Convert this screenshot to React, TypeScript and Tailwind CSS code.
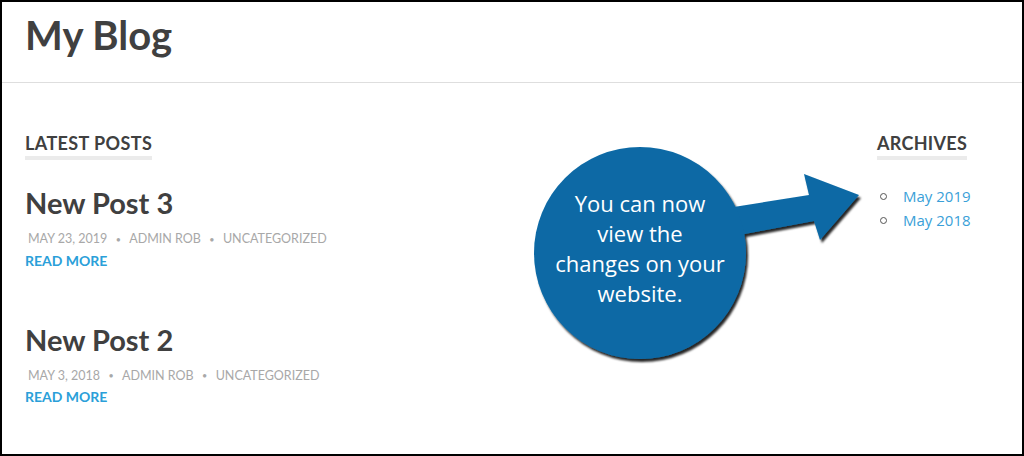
import React from "react";

const heading = { fontFamily: "Lato, 'Open Sans', sans-serif" };

function Post({ title, date, first }: { title: string; date: string; first?: boolean }) {
  return (
    <div className={`flex flex-col ${first ? "mt-[28px]" : "mt-[57px]"}`}>
      <h2 className="text-[29px] font-bold leading-none text-[#404040]" style={heading}>
        {title}
      </h2>
      <div
        className="mt-[16px] pl-[3px] text-[12.5px] leading-none text-[#a8a8a8] uppercase flex items-center"
        style={heading}
      >
        <span>{date}</span>
        <span className="w-[22px] text-center text-[9px]">•</span>
        <span>Admin Rob</span>
        <span className="w-[22px] text-center text-[9px]">•</span>
        <span>Uncategorized</span>
      </div>
      <a className="mt-[8px] text-[14px] font-bold leading-none text-[#2b9fd9] uppercase" style={heading}>
        Read More
      </a>
    </div>
  );
}

function Callout() {
  return (
    <div className="absolute inset-0 pointer-events-none">
      <svg width="1024" height="456" className="absolute left-0 top-0">
        <defs>
          <filter id="sh" x="-20%" y="-20%" width="140%" height="140%">
            <feDropShadow dx="2" dy="3" stdDeviation="1.3" floodColor="#000" floodOpacity="0.85" />
          </filter>
        </defs>
        <g filter="url(#sh)">
          <polygon
            points="700,210 807,193 802,172 857,193 818,238 812,219 700,240"
            fill="#0a69a5"
          />
          <circle cx="638" cy="251" r="106" fill="#0a69a5" />
        </g>
      </svg>
      <div
        className="absolute left-[532px] top-[186px] w-[212px] text-center text-white text-[22px] leading-[30px]"
        style={{ fontFamily: "'Open Sans', sans-serif" }}
      >
        You can now
        <br />
        view the
        <br />
        changes on your
        <br />
        website.
      </div>
    </div>
  );
}

export default function App() {
  return (
    <div className="relative w-[1024px] h-[456px] border-2 border-black bg-white overflow-hidden">
      <header className="h-[81px] border-b border-[#dedede] pl-[23px] pt-[13px]">
        <h1 className="text-[40px] font-bold leading-none text-[#404040]" style={heading}>
          My Blog
        </h1>
      </header>
      <main className="flex justify-between pl-[23px] pt-[51px]">
        <section className="flex flex-col">
          <div className="self-start">
            <h3 className="text-[18px] font-bold leading-none text-[#404040] uppercase tracking-[0.4px]" style={heading}>
              Latest Posts
            </h3>
            <div className="mt-[4px] h-[4px] bg-[#ebebeb]" />
          </div>
          <Post title="New Post 3" date="May 23, 2019" first />
          <Post title="New Post 2" date="May 3, 2018" />
        </section>
        <aside className="flex flex-col w-[145px]">
          <div className="self-start">
            <h3 className="text-[18px] font-bold leading-none text-[#404040] uppercase tracking-[0.3px]" style={heading}>
              Archives
            </h3>
            <div className="mt-[4px] h-[4px] bg-[#ebebeb]" />
          </div>
          <ul className="mt-[24px] flex flex-col" style={{ fontFamily: "'Open Sans', sans-serif" }}>
            {["May 2019", "May 2018"].map((m) => (
              <li key={m} className="flex items-center text-[15px] leading-[24px] text-[#3a9fd8] whitespace-nowrap">
                <span className="w-[7px] h-[7px] rounded-full border border-[#555] ml-[3px] mr-[16px]" />
                <a>{m}</a>
              </li>
            ))}
          </ul>
        </aside>
      </main>
      <Callout />
    </div>
  );
}
